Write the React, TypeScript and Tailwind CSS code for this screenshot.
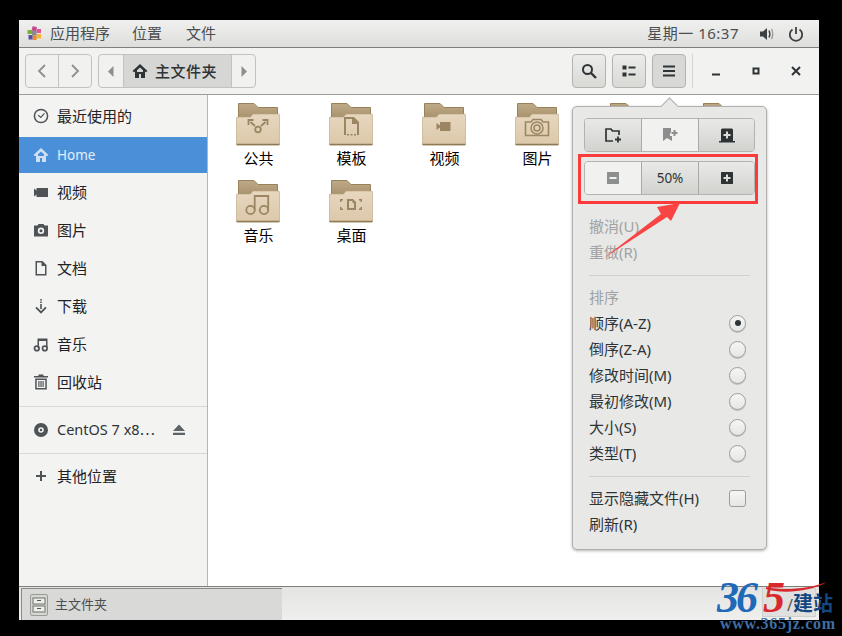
import React from 'react';

const font = 'font-["Noto_Sans","Noto_Sans_CJK_SC",sans-serif]';

const Ico: React.FC<{ size?: number; className?: string; children: React.ReactNode }> = ({ size = 16, className = '', children }) => (
  <svg width={size} height={size} viewBox="0 0 16 16" fill="currentColor" className={`shrink-0 ${className}`}>
    {children}
  </svg>
);

const HomeIcon = ({ className = '' }: { className?: string }) => (
  <Ico className={className}>
    <path d="M8 1 0.5 8 2 9.3 3 8.4V15H7V11H9V15H13V8.4L14 9.3 15.5 8ZM8 4.5 11 7.3V9H5V7.3Z" fillRule="evenodd" />
  </Ico>
);

const sidebarIcons: Record<string, React.ReactNode> = {
  recent: (
    <>
      <circle cx="8" cy="8" r="6.6" fill="none" stroke="currentColor" strokeWidth="1.5" />
      <path d="M5.2 7.2 7.8 9.4 11.4 5.4" fill="none" stroke="currentColor" strokeWidth="1.2" />
    </>
  ),
  video: <path d="M1 4.5 3.5 6.5V4H15V13H3.5V10.5L1 12.5Z" />,
  photo: <path d="M5.5 2H10.5L11.5 3.5H15V14.5H1V3.5H4.5ZM8 5.6A3.2 3.2 0 1 0 8 12 3.2 3.2 0 0 0 8 5.6ZM8 7.3A1.5 1.5 0 1 1 8 10.3 1.5 1.5 0 0 1 8 7.3Z" fillRule="evenodd" />,
  doc: <path d="M2.5 1H9.5L13.5 5V15.5H2.5ZM4 2.5V14H12V6H8.5V2.5Z" fillRule="evenodd" />,
  download: (
    <>
      <path d="M7.2 1H8.8V2.5H7.2ZM7.2 3.5H8.8V5H7.2ZM7.2 6H8.8V11H7.2Z" />
      <path d="M3 8.8 8 13.8 13 8.8" fill="none" stroke="currentColor" strokeWidth="1.9" transform="translate(0 0.6)" />
    </>
  ),
  music: (
    <>
      <path d="M4.5 2.5H14.5V12H13V5H6V12H4.5Z" />
      <circle cx="3.8" cy="12.4" r="2.3" fill="none" stroke="currentColor" strokeWidth="1.7" />
      <circle cx="11.8" cy="12.4" r="2.3" fill="none" stroke="currentColor" strokeWidth="1.7" />
    </>
  ),
  trash: (
    <>
      <path d="M5.5 0.5H10.5V2H15V3.5H1V2H5.5Z" />
      <path d="M2.2 4.5H13.8V15.5H2.2ZM3.7 6V14H12.3V6Z" fillRule="evenodd" />
      <path d="M5.3 7H6.5V13H5.3ZM7.4 7H8.6V13H7.4ZM9.5 7H10.7V13H9.5Z" />
    </>
  ),
  disc: <path d="M8 1A7 7 0 1 0 8 15 7 7 0 0 0 8 1ZM8 5.2A2.8 2.8 0 1 1 8 10.8 2.8 2.8 0 0 1 8 5.2ZM8 6.8A1.2 1.2 0 1 0 8 9.2 1.2 1.2 0 0 0 8 6.8Z" fillRule="evenodd" />,
  plus: <path d="M7 3H9V7H13V9H9V13H7V9H3V7H7Z" />,
};

const SidebarRow = ({ icon, label, active }: { icon: string | 'home'; label: string; active?: boolean }) => (
  <div className={`flex h-[36px] items-center pl-[14px] ${active ? 'bg-[#4a90d9] text-[13.5px] text-[#e4eefa]' : 'text-[15px] text-[#1f2326]'}`}>
    {icon === 'home' ? (
      <HomeIcon className="text-[#cfe0f5]" />
    ) : (
      <Ico className="text-[#4e5356]">{sidebarIcons[icon]}</Ico>
    )}
    <span className="ml-[8px]">{label}</span>
  </div>
);

const emblems: Record<string, React.ReactNode> = {
  share: (
    <g fill="none" stroke="#9c8563" strokeWidth="1.8">
      <circle cx="22" cy="27.5" r="2.8" />
      <path d="M19 24 14.5 20M25 24 29.5 20" />
      <path d="M12.5 23V18H17.5M31.5 23V18H26.5" strokeWidth="1.8" />
    </g>
  ),
  template: (
    <path d="M15 15H25L30 20V33H28V22H23V17H17V33H15ZM18 32H20V33.5H18ZM21.5 32H23.5V33.5H21.5ZM25 32H27V33.5H25Z" fill="#9c8563" />
  ),
  video: <path d="M14.5 21 18 23.5V20H28.5V29H18V25.5L14.5 28Z" fill="#9c8563" />,
  photo: (
    <g fill="none" stroke="#9c8563">
      <path d="M10.5 20H16L18 17.5H26L28 20H33.5V33.5H10.5Z" strokeWidth="1.6" />
      <circle cx="22" cy="26" r="6" strokeWidth="1.5" />
      <circle cx="22" cy="26" r="3" strokeWidth="1.5" />
    </g>
  ),
  music: (
    <g fill="none" stroke="#9c8563" strokeWidth="1.8">
      <circle cx="14.5" cy="31" r="4.2" />
      <circle cx="28" cy="31" r="4.2" />
      <path d="M18.7 31V17H32.2V31M18.7 17H32.2" />
    </g>
  ),
  desktop: (
    <g fill="#9c8563">
      <path d="M18 20H24L27 23V31H18ZM20 22V29H25V24H23.5V22Z" fillRule="evenodd" />
      <path d="M11 20H14V21.5H12.5V23H11ZM33 20H30V21.5H31.5V23H33ZM11 31H14V29.5H12.5V28H11ZM33 31H30V29.5H31.5V28H33Z" />
    </g>
  ),
};

const Folder = ({ emblem }: { emblem?: string }) => (
  <svg width="44" height="44" viewBox="0 0 44 44" className="block">
    <defs>
      <linearGradient id="tab" x1="0" y1="0" x2="0" y2="1">
        <stop offset="0" stopColor="#bfaa88" />
        <stop offset="1" stopColor="#a8926c" />
      </linearGradient>
      <linearGradient id="front" x1="0" y1="0" x2="0" y2="1">
        <stop offset="0" stopColor="#e7d7bf" />
        <stop offset="1" stopColor="#dcc8aa" />
      </linearGradient>
    </defs>
    <path d="M2.5 1.5H18L22 5.5H41.5V16H2.5Z" fill="url(#tab)" stroke="#988259" strokeWidth="1" />
    <path d="M1 15H14.5L17 12H42.5C43 12 43.5 12.5 43.5 13V42C43.5 42.6 43 43 42.5 43H1.5C1 43 0.5 42.6 0.5 42V15.5Z" fill="url(#front)" stroke="#b7a27f" strokeWidth="0.6" />
    <path d="M0.5 42.5H43.5" stroke="#8e7a55" strokeWidth="1.4" />
    {emblem && emblems[emblem]}
  </svg>
);

const FileItem = ({ name, emblem }: { name: string; emblem?: string }) => (
  <div className="flex w-[93px] flex-col items-center">
    <Folder emblem={emblem} />
    <span className="mt-[1px] ml-[2px] text-[15px] leading-[22px] text-black">{name}</span>
  </div>
);

const PopButton = ({ children, off, w }: { children: React.ReactNode; off?: boolean; w: string }) => (
  <div
    className={`flex h-full items-center justify-center border-r border-[#a9a9a6] last:border-r-0 ${w} ${
      off ? 'bg-[#f1f1f0] text-[#8d8f8f]' : 'bg-gradient-to-b from-[#e9e9e7] to-[#d2d2cf] text-[#2e3436]'
    }`}
  >
    {children}
  </div>
);

const MenuLine = ({ label, tone, right }: { label: string; tone?: 'dim'; right?: React.ReactNode }) => (
  <div className={`flex h-[26px] items-center justify-between pr-[20px] pl-[16px] text-[15px] ${tone === 'dim' ? 'text-[#a1a3a3]' : 'text-[#2e3436]'}`}>
    <span>{label}</span>
    {right}
  </div>
);

const Radio = ({ on }: { on?: boolean }) => (
  <span className="flex h-[17px] w-[17px] items-center justify-center rounded-full border border-[#9d9d9b] bg-gradient-to-b from-[#f6f6f5] to-[#e6e6e4] shadow-[0_1px_0_#bdbdbb]">
    {on && <span className="h-[6px] w-[6px] rounded-full bg-[#2e3436]" />}
  </span>
);

const ToolButton = ({ children, dark }: { children: React.ReactNode; dark?: boolean }) => (
  <div className={`flex h-[34px] w-[34px] items-center justify-center rounded-[4px] border border-[#b3b3b0] text-[#2e3436] ${dark ? 'bg-[#d8d8d6]' : 'bg-gradient-to-b from-[#ececea] to-[#d9d9d6]'}`}>
    {children}
  </div>
);

const Divider = () => <div className="mt-[10px] mb-[8px] h-px bg-[#d0d0ce]" />;

const App: React.FC = () => {
  return (
    <div className={`h-[636px] w-[842px] overflow-hidden bg-black pt-[20px] pl-[19px] ${font}`}>
      <div className="relative flex h-[600px] w-[800px] flex-col bg-white">
        {/* top bar */}
        <div className="flex h-[28px] shrink-0 items-center justify-between border-b border-[#7f7f7d] bg-gradient-to-b from-[#f0f0ef] to-[#dededd] text-[15px] text-[#4a4e50]">
          <div className="flex items-center pl-[8px]">
            <svg width="15" height="15" viewBox="0 0 15 15">
              <rect x="5" y="0.5" width="4.5" height="4.5" fill="#c04a8c" transform="rotate(12 7 3)" />
              <rect x="9.5" y="3" width="4.5" height="4" fill="#e0559a" />
              <rect x="0.5" y="4" width="4.5" height="4" fill="#7bb03e" />
              <rect x="9.5" y="8" width="4.5" height="4.5" fill="#f2b632" />
              <rect x="5.5" y="9.5" width="4" height="4.5" fill="#e88a2c" />
              <rect x="1.5" y="9" width="4" height="4.5" fill="#5a4ea0" />
              <rect x="5" y="5" width="4.5" height="4.5" fill="#8a8a8a" />
            </svg>
            <span className="ml-[8px]">应用程序</span>
            <span className="ml-[22px]">位置</span>
            <span className="ml-[24px]">文件</span>
          </div>
          <div className="flex items-center pr-[15px]">
            <span className="tracking-[0.5px]">星期一 16:37</span>
            <svg width="16" height="16" viewBox="0 0 16 16" className="ml-[20px] text-[#3d4144]" fill="currentColor">
              <path d="M1 5.5H4L8 2V14L4 10.5H1Z" />
              <path d="M10 4.5C11 6.5 11 9.5 10 11.5" fill="none" stroke="currentColor" strokeWidth="1.4" />
              <path d="M12.5 3C14 6 14 10 12.5 13" fill="none" stroke="#9a9c9d" strokeWidth="1.4" />
            </svg>
            <svg width="16" height="16" viewBox="0 0 16 16" className="ml-[13px] text-[#3d4144]" fill="none" stroke="currentColor" strokeWidth="1.8">
              <path d="M4.5 3.5A6.2 6.2 0 1 0 11.5 3.5" />
              <path d="M8 1V8" />
            </svg>
          </div>
        </div>

        {/* toolbar */}
        <div className="flex h-[47px] shrink-0 items-center border-b border-[#9c9c9a] bg-[#f2f2f1] pl-[6px]">
          <div className="flex h-[34px] w-[67px] rounded-[4px] border border-[#c2c2c0] bg-[#f1f1f0] text-[#8d8f8f]">
            <div className="flex w-[33px] items-center justify-center border-r border-[#c2c2c0]">
              <svg width="10" height="14" viewBox="0 0 10 14" fill="none" stroke="currentColor" strokeWidth="1.8"><path d="M8 1 2 7 8 13" /></svg>
            </div>
            <div className="flex flex-1 items-center justify-center">
              <svg width="10" height="14" viewBox="0 0 10 14" fill="none" stroke="currentColor" strokeWidth="1.8"><path d="M2 1 8 7 2 13" /></svg>
            </div>
          </div>
          <div className="ml-[6px] flex h-[34px] w-[158px] rounded-[4px] border border-[#c2c2c0] bg-[#f1f1f0] text-[#8d8f8f]">
            <div className="flex w-[24px] items-center justify-center">
              <svg width="6" height="11" viewBox="0 0 6 11" fill="currentColor"><path d="M5.5 0V11L0 5.5Z" /></svg>
            </div>
            <div className="flex w-[109px] items-center border-x border-[#c2c2c0] bg-[#d6d6d4] pl-[8px] text-[15px] tracking-[0.5px] text-[#2e3436]">
              <HomeIcon />
              <span className="ml-[7px] font-medium">主文件夹</span>
            </div>
            <div className="flex flex-1 items-center justify-center">
              <svg width="6" height="11" viewBox="0 0 6 11" fill="currentColor"><path d="M0.5 0V11L6 5.5Z" /></svg>
            </div>
          </div>
          <div className="ml-auto flex items-center gap-[6px]">
            <ToolButton>
              <svg width="16" height="16" viewBox="0 0 16 16" fill="none" stroke="currentColor" strokeWidth="2"><circle cx="6.5" cy="6.5" r="4.5" /><path d="M10 10 15 15" strokeWidth="2.4" /></svg>
            </ToolButton>
            <ToolButton>
              <svg width="14" height="14" viewBox="0 0 14 14" fill="currentColor"><path d="M0.5 1.5H4.5V5.5H0.5ZM0.5 8.5H4.5V12.5H0.5ZM6.5 2.5H13.5V4.5H6.5ZM6.5 9.5H13.5V11.5H6.5Z" /></svg>
            </ToolButton>
            <ToolButton dark>
              <svg width="14" height="14" viewBox="0 0 14 14" fill="currentColor"><path d="M1 1.5H13V3.5H1ZM1 6H13V8H1ZM1 10.5H13V12.5H1Z" /></svg>
            </ToolButton>
          </div>
          <div className="ml-[6px] h-[34px] w-px bg-[#d5d5d3]" />
          <div className="flex w-[126px] items-center justify-between pr-[17px] pl-[17px] text-[#2e3436]">
            <svg width="12" height="12" viewBox="0 0 12 12" fill="currentColor"><path d="M1 8.5H9V10.5H1Z" transform="translate(1 0)" /></svg>
            <svg width="12" height="12" viewBox="0 0 12 12" fill="currentColor"><path d="M2.5 2.5H9.5V9.5H2.5ZM4.5 4.5V7.5H7.5V4.5Z" fillRule="evenodd" /></svg>
            <svg width="12" height="12" viewBox="0 0 12 12" fill="none" stroke="currentColor" strokeWidth="2"><path d="M2 2 10 10M10 2 2 10" /></svg>
          </div>
        </div>

        {/* body */}
        <div className="flex min-h-0 flex-1">
          <aside className="flex w-[189px] shrink-0 flex-col gap-[2px] border-r border-[#b5b5b3] bg-[#f3f3f2] pt-[3px]">
            <SidebarRow icon="recent" label="最近使用的" />
            <div className="mt-[1px] -mb-[1px]"><SidebarRow icon="home" label="Home" active /></div>
            <SidebarRow icon="video" label="视频" />
            <SidebarRow icon="photo" label="图片" />
            <SidebarRow icon="doc" label="文档" />
            <SidebarRow icon="download" label="下载" />
            <SidebarRow icon="music" label="音乐" />
            <SidebarRow icon="trash" label="回收站" />
            <div className="mt-[4px] h-px bg-[#d8d8d6]" />
            <div className="my-[3px] flex h-[36px] items-center justify-between pr-[21px] pl-[14px] text-[14.5px] text-[#2e3436]">
              <div className="flex items-center">
                <Ico className="text-[#4e5356]">{sidebarIcons.disc}</Ico>
                <span className="ml-[8px]">CentOS 7 x8⋯</span>
              </div>
              <svg width="14" height="14" viewBox="0 0 14 14" fill="#5d6466"><path d="M7 1.5 13 8H1ZM1 9.8H13V12H1Z" /></svg>
            </div>
            <div className="h-px bg-[#d8d8d6]" />
            <div className="mt-[2px]"><SidebarRow icon="plus" label="其他位置" /></div>
          </aside>
          <main className="flex flex-1 flex-wrap content-start pt-[7px] pl-[3px]">
            <div className="flex h-[77px] w-full">
              <FileItem name="公共" emblem="share" />
              <FileItem name="模板" emblem="template" />
              <FileItem name="视频" emblem="video" />
              <FileItem name="图片" emblem="photo" />
              <FileItem name="文档" />
              <FileItem name="下载" />
            </div>
            <div className="flex w-full">
              <FileItem name="音乐" emblem="music" />
              <FileItem name="桌面" emblem="desktop" />
            </div>
          </main>
        </div>

        {/* status bar */}
        <div className="flex h-[34px] shrink-0 border-t border-[#7f7f7d] bg-gradient-to-b from-[#e4e4e3] to-[#efefee] pt-[1px] pl-[2px]">
          <div className="flex w-[261px] items-center border-t border-l border-[#8a8a88] bg-[#d9d9d8] pl-[8px] text-[13px] text-[#4a4e50]">
            <svg width="18" height="22" viewBox="0 0 18 22">
              <rect x="0.5" y="0.5" width="17" height="21" rx="1.5" fill="#d5d7d2" stroke="#9a9c97" />
              <rect x="3" y="4" width="12" height="6" fill="#eceee9" stroke="#6f726c" />
              <rect x="3" y="12" width="12" height="6" fill="#eceee9" stroke="#6f726c" />
              <path d="M7 6.5H11M7 14.5H11" stroke="#55584f" />
            </svg>
            <span className="ml-[7px]">主文件夹</span>
          </div>
        </div>

        {/* popover menu */}
        <div className="absolute top-[86px] left-[553px] h-[444px] w-[195px] rounded-[5px] border border-[#b0b0ae] bg-[#e8e8e7] shadow-[0_1px_3px_rgba(0,0,0,0.3)]">
          <div className="absolute -top-[7px] left-[90px] h-[13px] w-[13px] rotate-45 border-t border-l border-[#b0b0ae] bg-[#e8e8e7]" />
          <div className="relative px-[11px] pt-[11px]">
            <div className="flex h-[34px] overflow-hidden rounded-[4px] border border-[#b3b3b0]">
              <PopButton w="w-[57px]">
                <svg width="18" height="16" viewBox="0 0 18 16" fill="none" stroke="currentColor" strokeWidth="1.7"><path d="M9 14H2V2H7L8.5 4H15V8" /><path d="M14 9.5V15.5M11 12.5H17" strokeWidth="1.8" /></svg>
              </PopButton>
              <PopButton w="w-[57px]" off>
                <svg width="18" height="16" viewBox="0 0 18 16" fill="currentColor"><path d="M2 1H10V6H9V9H11V14L6 11 2 14Z" /><path d="M12.5 3H14.5V5H16.5V7H14.5V9H12.5V7H10.5V5H12.5Z" /></svg>
              </PopButton>
              <PopButton w="flex-1">
                <svg width="18" height="16" viewBox="0 0 18 16" fill="currentColor"><path d="M3 14V3C3 2 4 1.5 4.5 1.5H13.5C14 1.5 15 2 15 3V14H17V15.5H1V14ZM8 4.5V7H5.5V9H8V11.5H10V9H12.5V7H10V4.5Z" fillRule="evenodd" /></svg>
              </PopButton>
            </div>
            <div className="mt-[9px] flex h-[34px] overflow-hidden rounded-[4px] border border-[#b3b3b0]">
              <PopButton w="w-[57px]" off>
                <svg width="14" height="14" viewBox="0 0 14 14" fill="currentColor"><path d="M1.5 1H12.5C12.8 1 13 1.2 13 1.5V12.5C13 12.8 12.8 13 12.5 13H1.5C1.2 13 1 12.8 1 12.5V1.5C1 1.2 1.2 1 1.5 1ZM3.5 6V8H10.5V6Z" fillRule="evenodd" /></svg>
              </PopButton>
              <PopButton w="w-[57px]">
                <span className="text-[13.5px]">50%</span>
              </PopButton>
              <PopButton w="flex-1">
                <svg width="14" height="14" viewBox="0 0 14 14" fill="currentColor"><path d="M1.5 1H12.5C12.8 1 13 1.2 13 1.5V12.5C13 12.8 12.8 13 12.5 13H1.5C1.2 13 1 12.8 1 12.5V1.5C1 1.2 1.2 1 1.5 1ZM6 3.5V6H3.5V8H6V10.5H8V8H10.5V6H8V3.5Z" fillRule="evenodd" /></svg>
              </PopButton>
            </div>
          </div>
          <div className="relative mt-[18px]">
            <MenuLine label="撤消(U)" tone="dim" />
            <MenuLine label="重做(R)" tone="dim" />
            <div className="mx-[16px]"><Divider /></div>
            <MenuLine label="排序" tone="dim" />
            <MenuLine label="顺序(A-Z)" right={<Radio on />} />
            <MenuLine label="倒序(Z-A)" right={<Radio />} />
            <MenuLine label="修改时间(M)" right={<Radio />} />
            <MenuLine label="最初修改(M)" right={<Radio />} />
            <MenuLine label="大小(S)" right={<Radio />} />
            <MenuLine label="类型(T)" right={<Radio />} />
            <div className="mx-[16px]"><Divider /></div>
            <MenuLine
              label="显示隐藏文件(H)"
              right={<span className="h-[17px] w-[17px] rounded-[3px] border border-[#9d9d9b] bg-gradient-to-b from-[#f6f6f5] to-[#e6e6e4]" />}
            />
            <MenuLine label="刷新(R)" />
          </div>
        </div>

        {/* red annotation */}
        <div className="absolute top-[134px] left-[559px] h-[50px] w-[180px] border-[3px] border-[#fb3b3b]" />
        <svg width="90" height="70" viewBox="0 0 90 70" className="absolute top-[176px] left-[580px]">
          <path d="M5 62 L62 18 L58 11 L81 7 L72 25 L68 21Z" fill="#f94444" />
        </svg>
      </div>

      {/* watermark */}
      <div className="absolute top-[578px] left-[716px] h-[58px] w-[126px]">
        <div className="absolute top-[10px] left-[46px] h-[29px] w-[54px] border border-[#d0d0ce] bg-[#e0e0de]" />
        <span className="absolute top-[18px] left-[59px] text-[14px] leading-[16px] text-[#777]">1</span>
        <span className='absolute top-[4px] left-[1px] font-["Liberation_Serif",serif] text-[44px] leading-[32px] font-bold tracking-[-3px] text-[#1f6ab8] italic'>36</span>
        <span className='absolute top-[4px] left-[47px] font-["Liberation_Serif",serif] text-[44px] leading-[32px] font-bold text-[#d8282c] italic'>5</span>
        <svg width="62" height="12" viewBox="0 0 62 12" className="absolute top-[3px] left-[50px]">
          <path d="M0 6C18 10 42 8 61 1 44 11 16 13 0 8Z" fill="#d8282c" />
        </svg>
        <span className="absolute top-[17px] left-[71px] text-[16px] leading-[20px] text-[#555]">/</span>
        <span className="absolute top-[16px] left-[77px] text-[20px] leading-[20px] font-bold text-[#14467f]">建站</span>
        <span className='absolute top-[39px] left-[4px] font-["Liberation_Serif",serif] text-[16px] leading-[14px] font-bold tracking-[0.7px] text-[#3f6ea5]'>www.365jz.com</span>
      </div>
    </div>
  );
};

export default App;
